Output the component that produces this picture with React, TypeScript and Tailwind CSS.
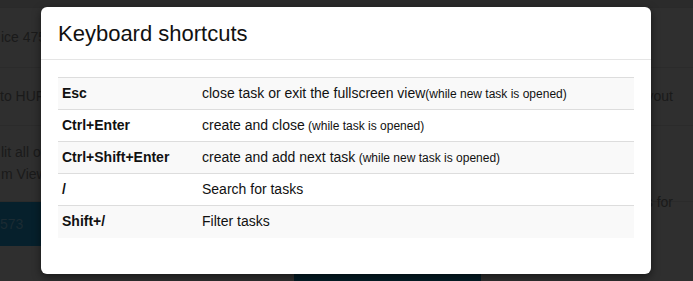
import React from 'react'

const shortcuts = [
    { keys: 'Esc', desc: 'close task or exit the fullscreen view', note: '(while new task is opened)', gap: false },
    { keys: 'Ctrl+Enter', desc: 'create and close', note: '(while task is opened)', gap: true },
    { keys: 'Ctrl+Shift+Enter', desc: 'create and add next task', note: '(while new task is opened)', gap: true },
    { keys: '/', desc: 'Search for tasks', note: '', gap: false },
    { keys: 'Shift+/', desc: 'Filter tasks', note: '', gap: false },
]

function Background() {
    return (
        <div className="h-[281px] w-full bg-[#2f2f2f] text-[14px] text-[#1a1a1a] flex flex-col overflow-hidden">
            <div className="h-[8px] border-b border-[#2a2a2a] bg-[#2b2b2b]" />
            <div className="h-[60px] flex items-center border-b border-[#2b2b2b] justify-between">
                <span className="pl-[1px]">ice 475</span>
                <span />
            </div>
            <div className="h-[58px] flex items-center border-b border-[#2b2b2b] justify-between">
                <span>to HUF</span>
                <span className="mr-[20px]">yout</span>
            </div>
            <div className="h-[76px] flex items-start pt-[15px] justify-between border-b border-[#2b2b2b]">
                <span className="leading-[22px] pl-[1px]">lit all of<br />m View</span>
                <span className="mr-[20px] mt-[51px]">s for</span>
            </div>
            <div className="flex h-[44px]">
                <div className="w-[42px] bg-[#06202c] flex items-center text-[#1b2b33]">573</div>
            </div>
            <div className="flex flex-1 pt-[26px]">
                <div className="w-[294px]" />
                <div className="w-[187px] bg-[#041c26]" />
            </div>
        </div>
    )
}

export default function App() {
    return (
        <div className="relative w-[693px] h-[281px] overflow-hidden" style={{ fontFamily: '"Liberation Sans", Arial, sans-serif' }}>
            <Background />

            <div className="absolute left-[41px] top-[7px] w-[610px] h-[267px] bg-white rounded-[6px] shadow-[0_3px_9px_rgba(0,0,0,0.5)]">
                <div className="h-[53px] border-b border-[#e5e5e5] px-[17px] flex items-center">
                    <h4 className="text-[22px] text-[#111] leading-none pt-[1px]">Keyboard shortcuts</h4>
                </div>

                <div className="px-[17px] pt-[17px]">
                    <table className="w-full border-collapse text-[14px] text-[#111]">
                        <tbody>
                            {shortcuts.map((s, i) => (
                                <tr key={s.keys} className={i % 2 === 0 ? 'bg-[#f9f9f9]' : 'bg-white'}>
                                    <td className="w-[144px] h-[32px] border-t border-[#dddddd] pl-[4px] font-bold">{s.keys}</td>
                                    <td className="h-[32px] border-t border-[#dddddd]">
                                        {s.desc}
                                        {s.note && <span className="text-[12px]">{s.gap ? ' ' : ''}{s.note}</span>}
                                    </td>
                                </tr>
                            ))}
                        </tbody>
                    </table>
                </div>
            </div>
        </div>
    )
}
